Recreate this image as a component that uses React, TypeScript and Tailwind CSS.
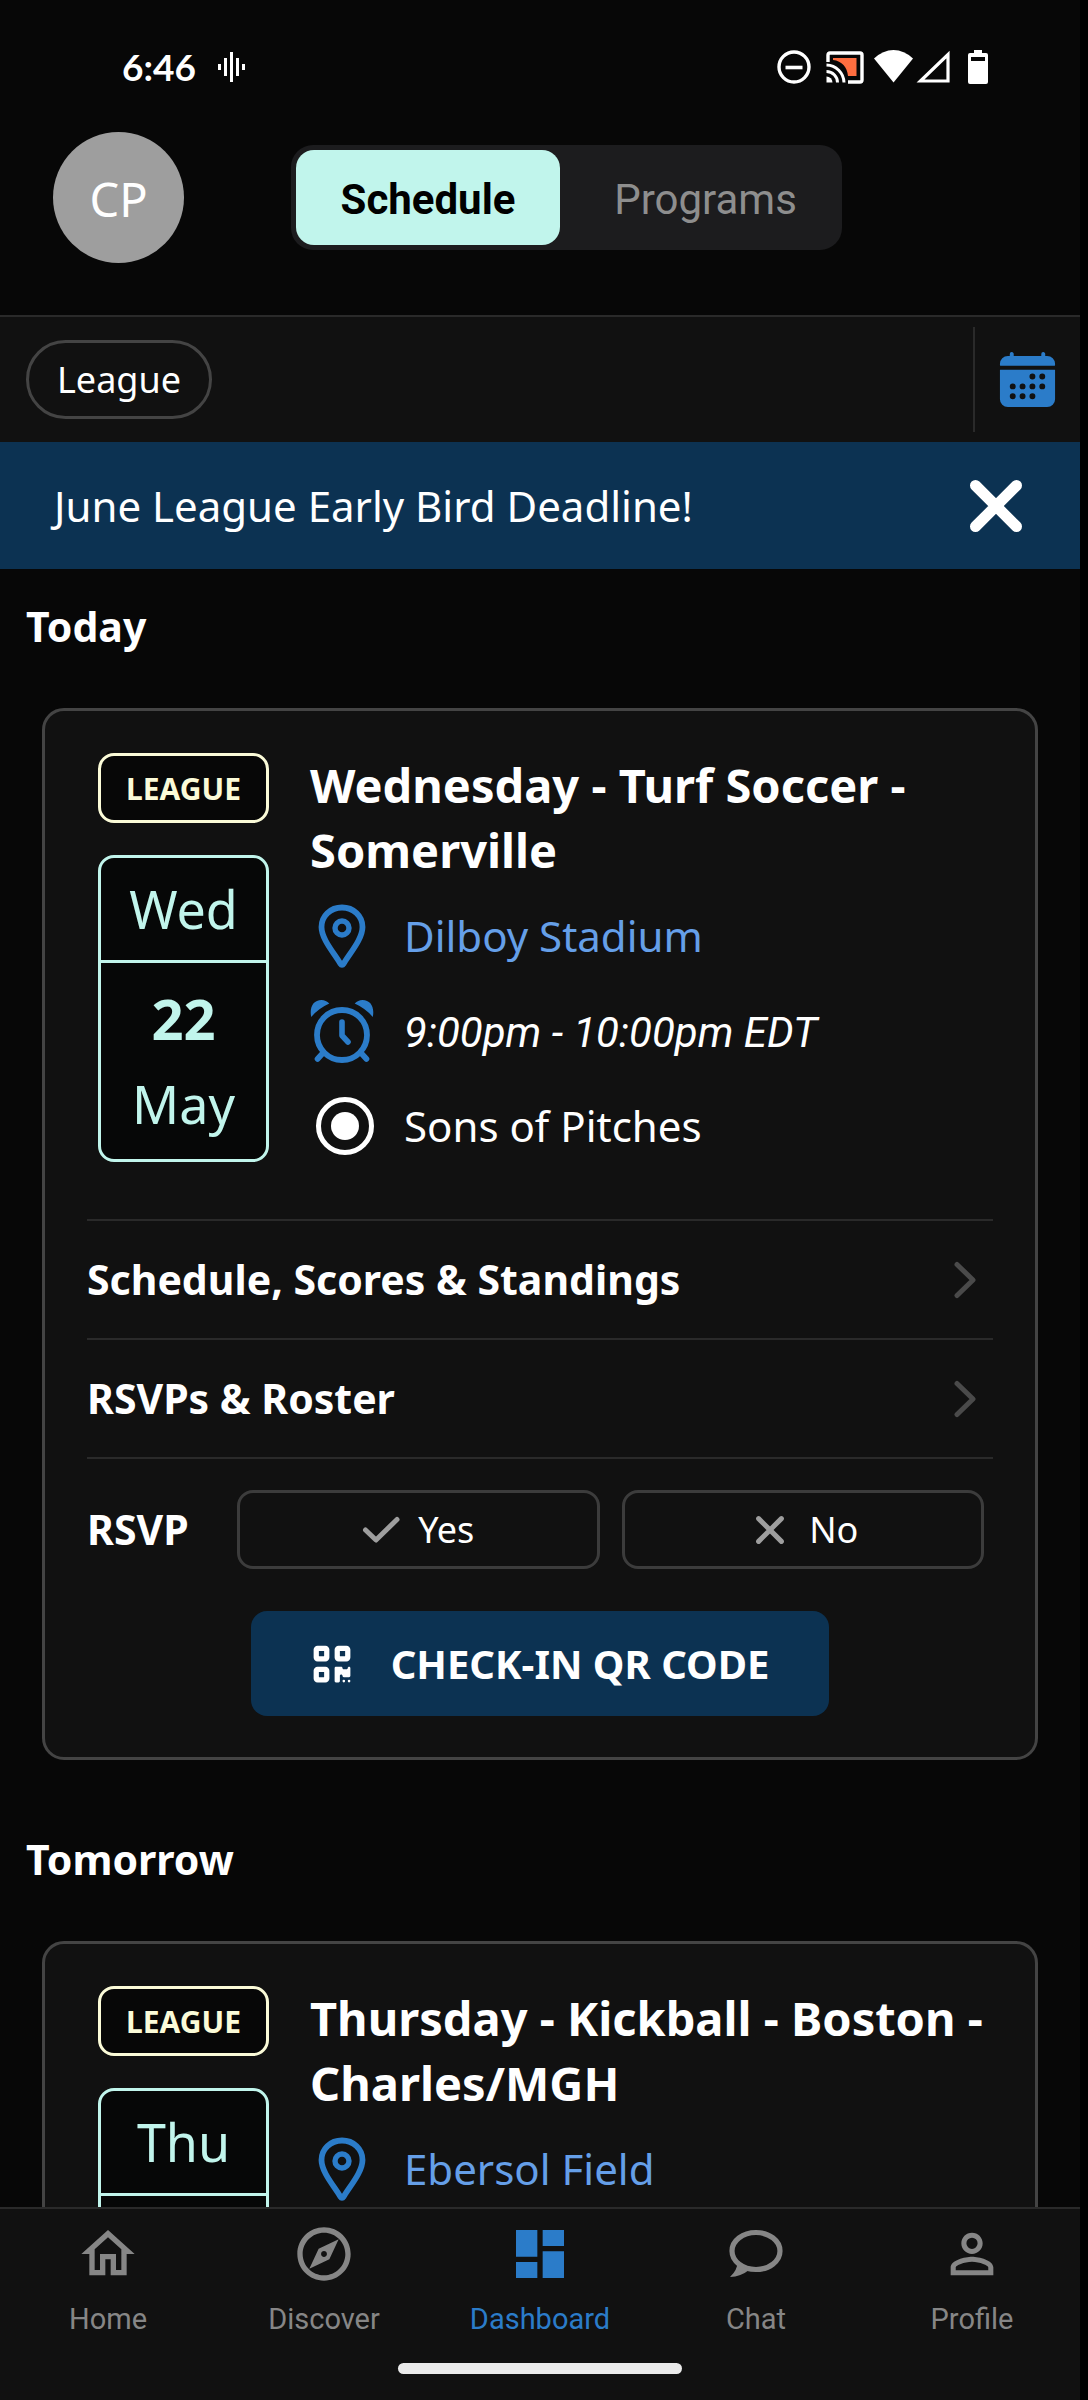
import React, { useState } from "react";
import { MdDashboard, MdOutlineExplore, MdOutlineHome, MdPersonOutline } from "react-icons/md";
import { IoCalendar } from "react-icons/io5";
import { FaQrcode } from "react-icons/fa6";

type EventInfo = {
  title: string;
  kind: string;
  weekday: string;
  place: string;
  date?: { day: string; month: string };
  time?: string;
  team?: string;
  checkIn?: boolean;
};

const TODAY: EventInfo = {
  title: "Wednesday - Turf Soccer - Somerville",
  kind: "LEAGUE",
  weekday: "Wed",
  place: "Dilboy Stadium",
  date: { day: "22", month: "May" },
  time: "9:00pm - 10:00pm EDT",
  team: "Sons of Pitches",
  checkIn: true,
};

const TOMORROW: EventInfo = {
  title: "Thursday - Kickball - Boston - Charles/MGH",
  kind: "LEAGUE",
  weekday: "Thu",
  place: "Ebersol Field",
};

function WaveIcon() {
  return (
    <svg width="28" height="30" viewBox="0 0 28 30" fill="currentColor" aria-hidden="true">
      <rect x="0" y="12" width="3" height="6" />
      <rect x="6" y="6" width="3" height="18" />
      <rect x="12" y="0" width="3" height="30" />
      <rect x="18" y="6" width="3" height="18" />
      <rect x="24" y="12" width="3" height="6" />
    </svg>
  );
}

function StatusIcons() {
  return (
    <svg width="212" height="36" viewBox="0 0 212 36" fill="none" aria-hidden="true">
      <circle cx="17" cy="18" r="15" stroke="#fff" strokeWidth="3.4" />
      <path d="M8.500 18.500h17" stroke="#fff" strokeWidth="3.600" />
      <path d="M56 9h23.500v18H71C70 18 65 12 56 11z" fill="#ff6e40" />
      <path d="M51 13V6q0-2 2-2h30q2 0 2 2v25q0 2-2 2H71" stroke="#fff" strokeWidth="3.400" />
      <path d="M49.500 16A18 18 0 0 1 67 33.500M49.500 22.500A11 11 0 0 1 60.500 33.500" stroke="#fff" strokeWidth="3" />
      <path d="M49.500 27.500a6 6 0 0 1 6 6h-6z" fill="#fff" />
      <path d="M97 9.500Q106 1 116.500 1T136 9.500L116.500 33.500z" fill="#fff" />
      <path d="M143.500 32 171 5.500V32z" stroke="#fff" strokeWidth="3.200" />
      <path d="M197 1h8v3h4q2 0 2 2v27q0 2-2 2h-16q-2 0-2-2V6q0-2 2-2h4zM194 8v4h14V8z" fill="#fff" fillRule="evenodd" />
    </svg>
  );
}

function PinIcon() {
  return (
    <svg width="48" height="64" viewBox="0 0 48 64" fill="none" stroke="#2b7cc9" aria-hidden="true">
      <path
        d="M24 3.500C12.500 3.500 3.500 12 3.500 23 3.500 35 16 49 22.300 59.500q1.700 2.500 3.400 0C32 49 44.500 35 44.500 23 44.500 12 35.500 3.500 24 3.500z"
        strokeWidth="5.800"
        strokeLinejoin="round"
      />
      <circle cx="24" cy="24" r="7" strokeWidth="5.400" />
    </svg>
  );
}

function AlarmIcon() {
  return (
    <svg width="64" height="64" viewBox="0 0 64 64" fill="none" stroke="#2b7cc9" strokeLinecap="round" aria-hidden="true">
      <circle cx="32" cy="36" r="25" strokeWidth="5.800" />
      <path d="M32 23v13.500l6 6.500" strokeWidth="5.600" strokeLinejoin="round" />
      <path d="M12.500 54.500l-5 5.500M51.500 54.500l5 5.500" strokeWidth="5.600" />
      <path
        d="M1.200 18C-.8 8 3.500 1 11.500 1q4.500 0 7.800 3.600Q8.500 9.500 1.200 18zM62.800 18C64.800 8 60.500 1 52.500 1q-4.500 0-7.800 3.600Q55.500 9.500 62.800 18z"
        fill="#2b7cc9"
        stroke="none"
      />
    </svg>
  );
}

function CrossIcon({ size, weight }: { size: number; weight: number }) {
  return (
    <svg width={size} height={size} viewBox="0 0 54 54" fill="none" stroke="currentColor" strokeWidth={weight} strokeLinecap="round" aria-hidden="true">
      <path d="M6.500 6.500l41 41M47.500 6.500l-41 41" />
    </svg>
  );
}

function CheckIcon() {
  return (
    <svg width="38" height="28" viewBox="0 0 38 28" fill="none" stroke="currentColor" strokeWidth="5" strokeLinecap="round" strokeLinejoin="round" aria-hidden="true">
      <path d="M3.500 14l10.500 10L35 3.500" />
    </svg>
  );
}

function ChevronIcon() {
  return (
    <svg width="24" height="38" viewBox="0 0 24 38" fill="none" stroke="#4a4a4a" strokeWidth="5" strokeLinecap="round" strokeLinejoin="round" aria-hidden="true">
      <path d="M4 3.500L20 19 4 34.500" />
    </svg>
  );
}

function ChatIcon() {
  return (
    <svg width="64" height="64" viewBox="0 0 64 64" fill="none" aria-hidden="true">
      <ellipse cx="32" cy="29" rx="24" ry="18.500" stroke="currentColor" strokeWidth="5.200" />
      <path d="M13.500 40q0 8-7.500 15 11-.5 19-7z" fill="currentColor" />
    </svg>
  );
}

function EventActions() {
  const [rsvp, setRsvp] = useState<"yes" | "no" | null>(null);
  return (
    <>
      {["Schedule, Scores & Standings", "RSVPs & Roster"].map((label) => (
        <a key={label} href="#details" className="flex h-[119px] items-center justify-between border-t-2 border-[#2a2a2a] pr-4 text-[41px] font-bold">
          {label}
          <ChevronIcon />
        </a>
      ))}
      <div className="flex items-center border-t-2 border-[#2a2a2a] pt-[31px] pr-[9px]">
        <span className="w-[150px] text-[41px] font-bold">RSVP</span>
        <div className="grid flex-1 grid-cols-2 gap-[22px] text-[36px]">
          <button
            type="button"
            aria-pressed={rsvp === "yes"}
            onClick={() => setRsvp("yes")}
            className="flex h-[79px] items-center justify-center gap-[18px] rounded-2xl border-3 border-[#3c3c3c]"
          >
            <span className="text-[#9e9e9e]"><CheckIcon /></span>
            Yes
          </button>
          <button
            type="button"
            aria-pressed={rsvp === "no"}
            onClick={() => setRsvp("no")}
            className="flex h-[79px] items-center justify-center gap-6 rounded-2xl border-3 border-[#3c3c3c] pl-2"
          >
            <span className="text-[#9e9e9e]"><CrossIcon size={30} weight={9} /></span>
            No
          </button>
        </div>
      </div>
      <div className="flex justify-center pt-[42px]">
        <button type="button" className="flex h-[105px] items-center gap-[38px] rounded-2xl bg-[#0c3252] px-[60px] text-[40px] font-bold">
          <FaQrcode size={42} />
          CHECK-IN QR CODE
        </button>
      </div>
    </>
  );
}

function EventCard({ event }: { event: EventInfo }) {
  return (
    <article className="mx-[42px] rounded-[22px] border-3 border-[#444] bg-[#111] px-[42px] pt-[42px] pb-[41px]">
      <div className="flex gap-[41px] pb-[46px] pl-[11px]">
        <div className="flex w-[171px] shrink-0 flex-col gap-8">
          <span className="flex h-[70px] items-center justify-center rounded-2xl border-3 border-[#fbfbd8] bg-[#070707] text-[30px] font-bold text-[#fbfbd8]">
            {event.kind}
          </span>
          <div className="min-h-[307px] rounded-2xl border-3 border-[#c1f5ec] bg-[#060707] text-center text-[52px] text-[#c1f5ec]">
            <p className="border-b-3 border-[#c1f5ec] leading-[102px]">{event.weekday}</p>
            {event.date && (
              <>
                <p className="pt-3 text-[56px] leading-[86px] font-bold">{event.date.day}</p>
                <p className="leading-[86px]">{event.date.month}</p>
              </>
            )}
          </div>
        </div>
        <div className="min-w-0 flex-1">
          <h3 className="text-[47px] leading-[65px] font-bold">{event.title}</h3>
          <ul className="pt-[5px] text-[42px]">
            <li className="flex h-[95px] items-center gap-[30px]">
              <span className="flex w-16 justify-center"><PinIcon /></span>
              <a href="#place" className="text-[#659fe8]">{event.place}</a>
            </li>
            {event.time && (
              <li className="flex h-[95px] items-center gap-[30px]">
                <AlarmIcon />
                <time className="pt-1 font-['Roboto',sans-serif] italic">{event.time}</time>
              </li>
            )}
            {event.team && (
              <li className="flex h-[95px] items-center gap-[30px]">
                <span className="flex w-16 justify-end">
                  <span className="flex size-[58px] items-center justify-center rounded-full border-[5px] border-white">
                    <span className="size-7 rounded-full bg-white" />
                  </span>
                </span>
                <span>{event.team}</span>
              </li>
            )}
          </ul>
        </div>
      </div>
      {event.checkIn && <EventActions />}
    </article>
  );
}

const NAV = [
  { label: "Home", icon: <MdOutlineHome size={64} /> },
  { label: "Discover", icon: <MdOutlineExplore size={64} /> },
  { label: "Dashboard", icon: <MdDashboard size={64} />, active: true },
  { label: "Chat", icon: <ChatIcon /> },
  { label: "Profile", icon: <MdPersonOutline size={64} /> },
];

export default function App() {
  const [tab, setTab] = useState("Schedule");
  const [banner, setBanner] = useState(true);
  return (
    <div className="h-screen bg-black pr-2 font-['Noto_Sans',sans-serif] text-white">
      <div className="flex h-full flex-col overflow-hidden bg-[#070707]">
        <div className="mt-[22px] flex h-[90px] shrink-0 items-center justify-between pr-[91px] pl-[122px]">
          <div className="flex items-center gap-[22px]">
            <span className="font-['Lato',sans-serif] text-[37px] font-bold">6:46</span>
            <WaveIcon />
          </div>
          <StatusIcons />
        </div>

        <header className="mt-5 flex shrink-0 items-center gap-[107px] border-b-2 border-[#2a2a2a] pb-[52px] pl-[53px]">
          <button type="button" aria-label="Account" className="size-[131px] rounded-full bg-[#9e9e9e] pt-1 text-[47px]">
            CP
          </button>
          <div role="tablist" className="flex h-[105px] w-[551px] gap-[14px] rounded-[22px] bg-[#1c1c1e] p-[5px] font-['Roboto',sans-serif] text-[42px]">
            {["Schedule", "Programs"].map((name) => (
              <button
                key={name}
                type="button"
                role="tab"
                aria-selected={tab === name}
                onClick={() => setTab(name)}
                className={
                  tab === name
                    ? "w-[264px] rounded-[18px] bg-[#c1f5ec] pt-1 font-bold text-black"
                    : "flex-1 rounded-[18px] pt-1 text-[#8e8e8e]"
                }
              >
                {name}
              </button>
            ))}
          </div>
        </header>

        <div className="flex h-[125px] shrink-0 items-center bg-[#111] pl-[26px]">
          <button type="button" className="h-[79px] rounded-full border-3 border-[#444] px-7 text-[36px]">
            League
          </button>
          <div className="my-[10px] ml-auto w-[2px] self-stretch bg-[#2a2a2a]" />
          <button type="button" aria-label="Calendar" className="flex w-[105px] justify-center text-[#2b7cc9]">
            <IoCalendar size={63} />
          </button>
        </div>

        {banner && (
          <div className="flex h-[127px] shrink-0 items-center justify-between bg-[#0c3252] pr-[57px] pl-[54px] text-[42px]">
            <p>June League Early Bird Deadline!</p>
            <button type="button" aria-label="Dismiss" onClick={() => setBanner(false)}>
              <CrossIcon size={54} weight={11} />
            </button>
          </div>
        )}

        <main className="min-h-0 flex-1 overflow-hidden">
          <section className="pb-[42px]">
            <h2 className="mb-[23px] flex h-[116px] items-center pl-[26px] text-[41px] font-bold">Today</h2>
            <EventCard event={TODAY} />
          </section>
          <section>
            <h2 className="mb-[23px] flex h-[116px] items-center pl-[26px] text-[41px] font-bold">Tomorrow</h2>
            <EventCard event={TOMORROW} />
          </section>
        </main>

        <nav className="shrink-0 border-t-2 border-[#2a2a2a] bg-[#111] pt-[13px] pb-[26px] font-['Roboto',sans-serif]">
          <div className="grid grid-cols-5">
            {NAV.map((item) => (
              <a
                key={item.label}
                href={"#" + item.label.toLowerCase()}
                aria-current={item.active ? "page" : undefined}
                className={
                  item.active
                    ? "flex flex-col items-center gap-[15px] text-[29px] leading-9 text-[#2b7cc9]"
                    : "flex flex-col items-center gap-[15px] text-[29px] leading-9 text-[#868686]"
                }
              >
                {item.icon}
                {item.label}
              </a>
            ))}
          </div>
          <div className="mx-auto mt-[26px] h-[11px] w-[284px] rounded-full bg-[#ebebeb]" />
        </nav>
      </div>
    </div>
  );
}
